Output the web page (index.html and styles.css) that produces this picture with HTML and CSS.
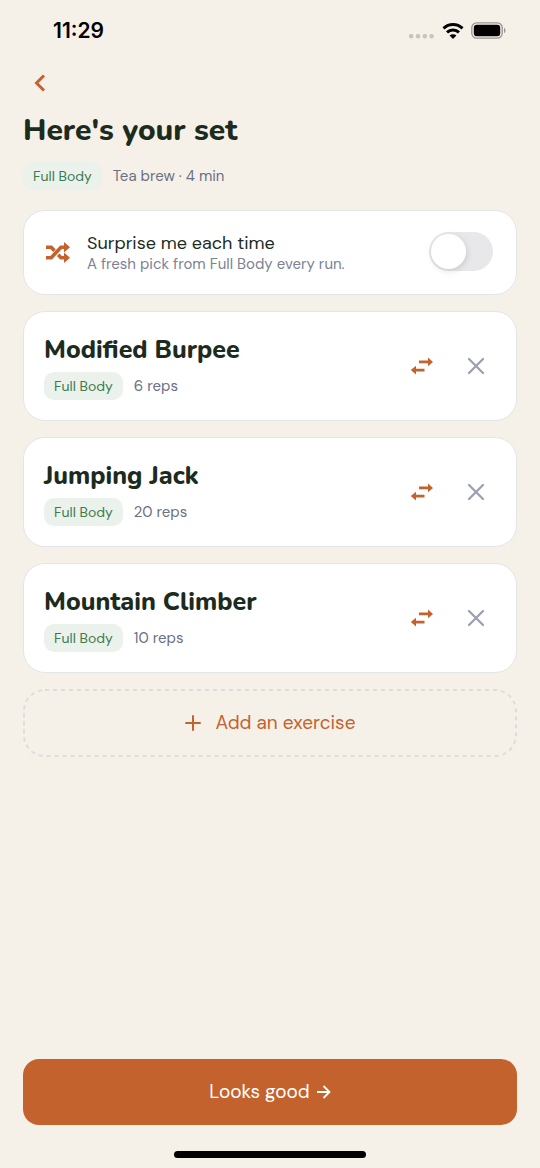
FILE: index.html
```html
<!DOCTYPE html>
<html lang="en">
<head>
<meta charset="utf-8">
<meta name="viewport" content="width=device-width, initial-scale=1">
<title>Here's your set</title>
<link rel="stylesheet" href="styles.css">
</head>
<body>
<svg class="sprite" aria-hidden="true">
  <symbol id="swap" viewBox="0 0 24 18"><path d="M9 3.600h9V.5L23 4.900 18 9.300V6.200H9zM14.500 11.800H6V8.700L.8 13.100 6 17.500V14.400h8.500z"/></symbol>
  <symbol id="close" viewBox="0 0 18 18"><path d="M2 2l14 14M16 2L2 16" fill="none" stroke="currentColor" stroke-width="2.300" stroke-linecap="round"/></symbol>
</svg>
<div class="screen">
  <header class="status">
    <span class="clock">11:29</span>
    <div class="indicators">
      <svg class="dots" viewBox="0 0 26 6" aria-hidden="true"><rect x="0" y="1" width="4.400" height="4.400" rx="1.800"/><rect x="6.800" y="1" width="4.400" height="4.400" rx="1.800"/><rect x="13.600" y="1" width="4.400" height="4.400" rx="1.800"/><rect x="20.400" y="1" width="4.400" height="4.400" rx="1.800"/></svg>
      <svg class="wifi" viewBox="0 0 22 16" aria-hidden="true"><path d="M1.500 5.400a13.700 13.700 0 0 1 19 0M5 9.400a8.700 8.700 0 0 1 12 0" fill="none" stroke="#000" stroke-width="3"/><path d="M11 16l-3.400-3.500a4.900 4.900 0 0 1 6.800 0z"/></svg>
      <svg class="battery" viewBox="0 0 35 18" aria-hidden="true"><rect x=".8" y=".8" width="30.400" height="15.400" rx="5" fill="none" stroke="#98948e" stroke-width="1.300"/><rect x="2.800" y="2.800" width="26.400" height="11.400" rx="3"/><path d="M33 6v5c2-.6 2-4.400 0-5z" fill="#98948e"/></svg>
    </div>
  </header>
  <main class="content">
    <button class="back" aria-label="Back"><svg viewBox="0 0 12 18" aria-hidden="true"><path d="M10 1.500L2.500 9l7.500 7.500" fill="none" stroke="currentColor" stroke-width="3"/></svg></button>
    <h1 class="title">Here's your set</h1>
    <div class="meta summary"><span class="chip">Full Body</span><span>Tea brew · 4 min</span></div>
    <div class="stack">
      <section class="card surprise">
        <svg class="shuffle" viewBox="0 0 24 21" aria-hidden="true"><path d="M0 5.300h5.200l3.300 3.500M0 15.700h5.200L15 5.300h4M12.200 12.700l2.800 3h4" fill="none" stroke="currentColor" stroke-width="3.600"/><path d="M18 0l6 5.300-6 5.200zM18 10.500l6 5.200-6 5.300z"/></svg>
        <label class="words" for="surprise"><span class="label">Surprise me each time</span><span class="hint">A fresh pick from Full Body every run.</span></label>
        <input class="switch" id="surprise" type="checkbox" role="switch">
      </section>
      <article class="card exercise">
        <div class="details"><h2 class="name">Modified Burpee</h2><div class="meta"><span class="chip">Full Body</span><span>6 reps</span></div></div>
        <button class="action swap" aria-label="Swap Modified Burpee"><svg aria-hidden="true"><use href="#swap"/></svg></button>
        <button class="action remove" aria-label="Remove Modified Burpee"><svg aria-hidden="true"><use href="#close"/></svg></button>
      </article>
      <article class="card exercise">
        <div class="details"><h2 class="name">Jumping Jack</h2><div class="meta"><span class="chip">Full Body</span><span>20 reps</span></div></div>
        <button class="action swap" aria-label="Swap Jumping Jack"><svg aria-hidden="true"><use href="#swap"/></svg></button>
        <button class="action remove" aria-label="Remove Jumping Jack"><svg aria-hidden="true"><use href="#close"/></svg></button>
      </article>
      <article class="card exercise">
        <div class="details"><h2 class="name">Mountain Climber</h2><div class="meta"><span class="chip">Full Body</span><span>10 reps</span></div></div>
        <button class="action swap" aria-label="Swap Mountain Climber"><svg aria-hidden="true"><use href="#swap"/></svg></button>
        <button class="action remove" aria-label="Remove Mountain Climber"><svg aria-hidden="true"><use href="#close"/></svg></button>
      </article>
      <button class="add">
        <svg class="outline" aria-hidden="true"><rect x="1" y="1" rx="21"/></svg>
        <svg class="plus" viewBox="0 0 16 16" aria-hidden="true"><path d="M8 1v14M1 8h14" stroke="currentColor" stroke-width="2" stroke-linecap="round"/></svg>
        <span>Add an exercise</span>
      </button>
    </div>
  </main>
  <footer class="footer">
    <button class="primary"><span>Looks good</span><svg viewBox="0 0 14 14" aria-hidden="true"><path d="M0 7h12.500M6.500 1l6 6-6 6" fill="none" stroke="currentColor" stroke-width="1.800"/></svg></button>
    <div class="home"></div>
  </footer>
</div>
</body>
</html>
```
FILE: styles.css
```css
* { box-sizing: border-box; }
body { margin: 0; background: #f5f0e8; color: #1c2b1e; font: 19px/22px "DM Sans", "Noto Sans", sans-serif; font-optical-sizing: none; }
button { font: inherit; font-optical-sizing: none; border: 0; padding: 0; background: none; cursor: pointer; }
h1, h2 { margin: 0; font-family: Nunito, "Open Sans", sans-serif; font-weight: 800; }
svg { display: block; flex: none; fill: currentColor; }
.sprite { position: absolute; width: 0; height: 0; }
.screen { min-height: 100vh; display: flex; flex-direction: column; }

.status { display: flex; justify-content: space-between; align-items: center; height: 62px; padding: 0 34px 0 53px; color: #000; }
.clock { font: 600 21px/24px Inter, sans-serif; }
.indicators { display: flex; align-items: center; gap: 7px; }
.dots { width: 26px; height: 6px; margin-top: 10px; color: #c8c3bc; }
.wifi { width: 22px; height: 16px; }
.battery { width: 35px; height: 18px; }

.content { flex: 1; padding: 0 23px; }
.back { display: flex; align-items: center; justify-content: center; width: 34px; height: 41px; color: #c4622d; }
.back svg { width: 12px; height: 18px; }
.title { margin-top: 8px; font-size: 30px; line-height: 40px; }
.meta { display: flex; align-items: center; gap: 11px; color: #6b7085; font-size: 15px; line-height: 20px; }
.summary { margin-top: 11px; }
.chip { padding: 4px 10px; border-radius: 10px; background: #eaf2eb; color: #3e7b52; font-size: 14px; line-height: 20px; }

.stack { display: flex; flex-direction: column; gap: 16px; margin-top: 20px; }
.card { display: flex; align-items: center; padding: 20px; border: 1px solid #e3e6e7; border-radius: 22px; background: #fff; }
.surprise { height: 85px; padding: 20px 23px 20px 22px; }
.shuffle { width: 24px; height: 21px; margin-right: 17px; color: #c4622d; }
.words { flex: 1; display: flex; flex-direction: column; }
.label { font-size: 18px; line-height: 22px; }
.hint { color: #7c8296; font-size: 15px; line-height: 20px; }
.switch { appearance: none; display: flex; width: 64px; height: 39px; margin: 0 0 2px; padding: 2px; border-radius: 20px; background: #e8e8ea; }
.switch::before { content: ""; width: 35px; height: 35px; border-radius: 50%; background: #fff; box-shadow: 1px 2px 6px #00000020; }
.switch:checked { justify-content: flex-end; background: #3e7b52; }

.exercise { min-height: 110px; padding-right: 18px; }
.details { flex: 1; }
.name { margin-bottom: 5px; font-size: 25px; line-height: 34px; }
.action { display: flex; align-items: center; justify-content: center; width: 44px; height: 44px; }
.swap { margin-right: 10px; color: #c4622d; }
.swap svg { width: 24px; height: 18px; }
.remove { color: #9ca0b2; }
.remove svg { width: 18px; height: 18px; }

.add { position: relative; display: flex; align-items: center; justify-content: center; gap: 15px; width: 100%; height: 68px; color: #c4622d; }
.outline { position: absolute; inset: 0; width: 100%; height: 100%; }
.outline rect { width: calc(100% - 2px); height: calc(100% - 2px); fill: none; stroke: #dcdddf; stroke-width: 2; stroke-dasharray: 4 4; }
.plus { width: 16px; height: 16px; }

.footer { display: flex; flex-direction: column; align-items: center; gap: 26px; padding: 24px 23px 10px; }
.primary { display: flex; align-items: center; justify-content: center; gap: 7px; width: 100%; height: 66px; border-radius: 16px; background: #c4622d; color: #fff; }
.primary svg { width: 14px; height: 14px; }
.home { width: 192px; height: 7px; border-radius: 4px; background: #000; }
```
